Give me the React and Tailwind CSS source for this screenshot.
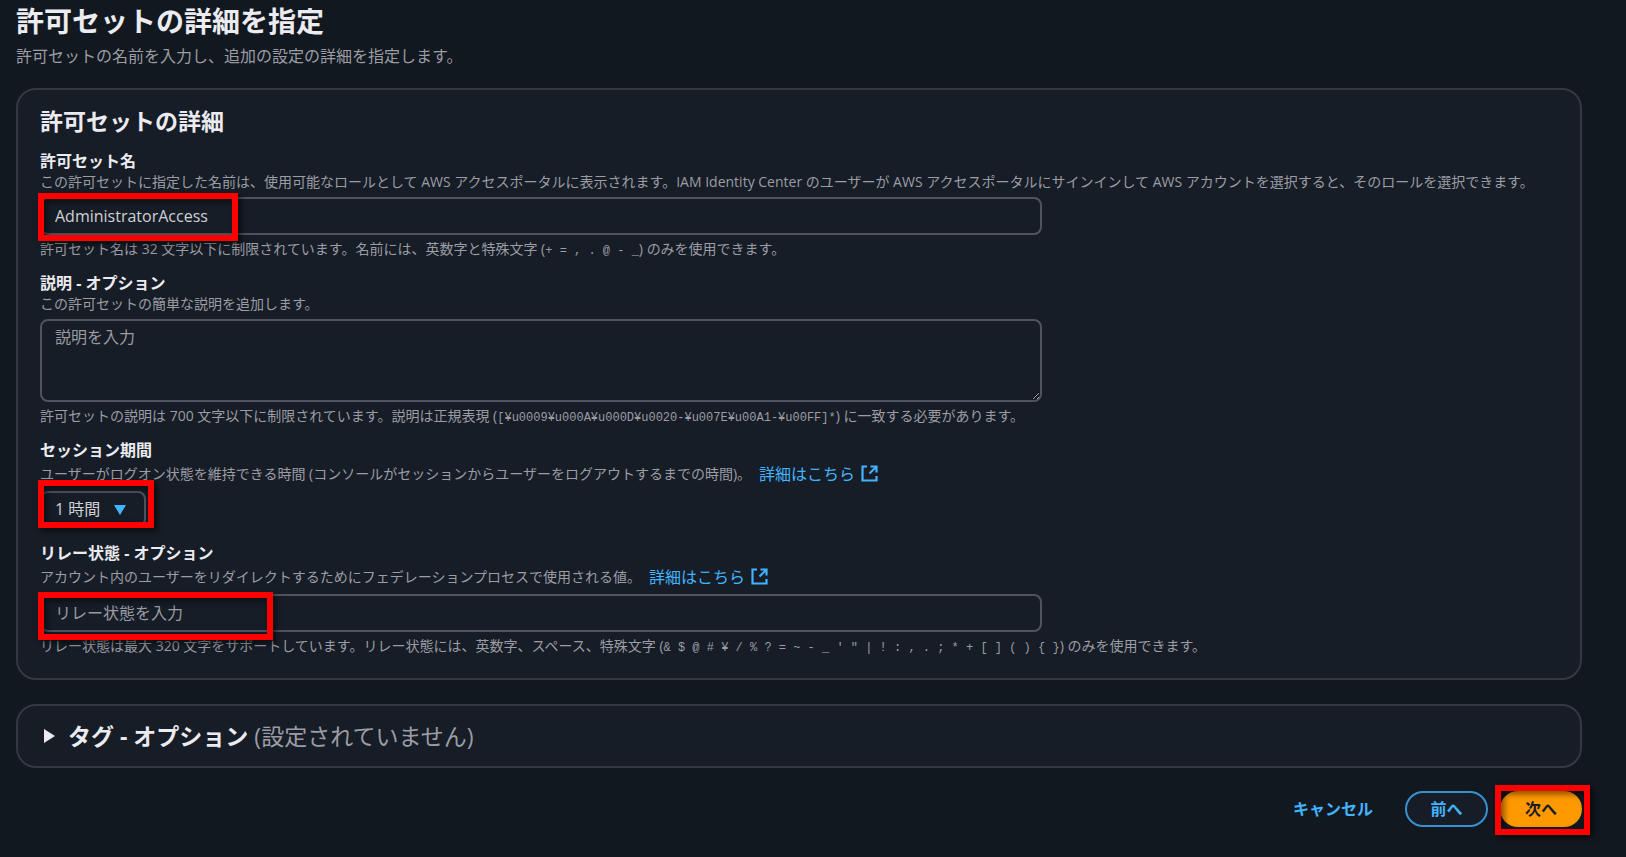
import { useState } from 'react';
import clsx from 'clsx';

const fontStack = "font-['Open_Sans','Noto_Sans_CJK_JP',sans-serif]";

function Highlight({ className }) {
  return (
    <span
      aria-hidden="true"
      className={clsx(
        'absolute pointer-events-none border-6 border-[#ff0000] shadow-[3px_3px_6px_rgba(0,0,0,0.6),inset_3px_3px_6px_rgba(0,0,0,0.5)]',
        className
      )}
    />
  );
}

function ExternalIcon() {
  return (
    <svg viewBox="0 0 17 17" className="size-[17px]" fill="none" stroke="currentColor" strokeWidth="2.2" aria-hidden="true">
      <path d="M6 1.5H1.5v14h14V11" />
      <path d="M9.5 1.5h6v6" />
      <path d="M15.5 1.5 8.5 8.5" />
    </svg>
  );
}

function MoreLink() {
  return (
    <a href="#more" className="inline-flex items-center gap-1.5 ml-2 text-base leading-5 text-[#42b4ff]">
      詳細はこちら
      <ExternalIcon />
    </a>
  );
}

function Label({ htmlFor, children }) {
  return (
    <label htmlFor={htmlFor} className="block text-base leading-5 font-bold text-[#ebebf0]">
      {children}
    </label>
  );
}

function Hint({ children }) {
  return <p className="mt-[3px] text-sm leading-[22px]">{children}</p>;
}

function Code({ children }) {
  return <code className="font-['Liberation_Mono',monospace] text-xs">{children}</code>;
}

const fieldClass =
  'block w-full rounded-lg border-2 border-[#4f535f] bg-[#161d26] px-[13px] text-base leading-6 text-[#d0d0d6] placeholder:text-[#9a9aa3] placeholder:opacity-100 outline-none';

export default function App() {
  const [name, setName] = useState('AdministratorAccess');
  const [description, setDescription] = useState('');
  const [duration, setDuration] = useState('1');
  const [relayState, setRelayState] = useState('');

  return (
    <div className={clsx(fontStack, 'min-h-screen bg-[#12181f] pl-4 pr-11 pt-1 pb-6 text-[#9c9ca5]')}>
      <header>
        <h1 className="text-[28px] leading-[34px] font-bold text-[#ebebf0]">許可セットの詳細を指定</h1>
        <p className="mt-2 text-base leading-5">許可セットの名前を入力し、追加の設定の詳細を指定します。</p>
      </header>

      <form onSubmit={(e) => e.preventDefault()}>
        <section className="mt-[22px] rounded-[20px] border-2 border-[#333843] bg-[#161d26] px-[22px] pt-4 pb-[21px]">
          <h2 className="mb-[15px] text-[23px] leading-[30px] font-bold text-[#ebebf0]">許可セットの詳細</h2>

          <div className="flex flex-col gap-[13px]">
            {/* Name */}
            <div>
              <Label htmlFor="name">許可セット名</Label>
              <p className="text-sm leading-[22px] whitespace-nowrap">
                この許可セットに指定した名前は、使用可能なロールとして AWS アクセスポータルに表示されます。IAM Identity Center のユーザーが AWS アクセスポータルにサインインして AWS アカウントを選択すると、そのロールを選択できます。
              </p>
              <div className="relative mt-1 w-[66%]">
                <input
                  id="name"
                  type="text"
                  value={name}
                  onChange={(e) => setName(e.target.value)}
                  className={clsx(fieldClass, 'h-[38px]')}
                />
                <Highlight className="-left-0.5 -top-1 h-12 w-[200px]" />
              </div>
              <Hint>
                許可セット名は 32 文字以下に制限されています。名前には、英数字と特殊文字 (<Code>+ = , . @ - _</Code>) のみを使用できます。
              </Hint>
            </div>

            {/* Description */}
            <div>
              <Label htmlFor="description">説明 - オプション</Label>
              <p className="text-sm leading-[22px]">この許可セットの簡単な説明を追加します。</p>
              <div className="mt-1 w-[66%]">
                <textarea
                  id="description"
                  placeholder="説明を入力"
                  value={description}
                  onChange={(e) => setDescription(e.target.value)}
                  className={clsx(fieldClass, 'h-[83px] resize py-1')}
                />
              </div>
              <Hint>
                許可セットの説明は 700 文字以下に制限されています。説明は正規表現 (<Code>[¥u0009¥u000A¥u000D¥u0020-¥u007E¥u00A1-¥u00FF]*</Code>) に一致する必要があります。
              </Hint>
            </div>

            {/* Session duration */}
            <div className="pb-[3px]">
              <Label htmlFor="duration">セッション期間</Label>
              <p className="flex items-center text-sm leading-[27px]">
                ユーザーがログオン状態を維持できる時間 (コンソールがセッションからユーザーをログアウトするまでの時間)。
                <MoreLink />
              </p>
              <div className="relative mt-1 w-[106px]">
                <select
                  id="duration"
                  value={duration}
                  onChange={(e) => setDuration(e.target.value)}
                  className={clsx(fieldClass, 'h-9 appearance-none')}
                >
                  <option value="1">1 時間</option>
                  <option value="2">2 時間</option>
                  <option value="4">4 時間</option>
                  <option value="8">8 時間</option>
                  <option value="12">12 時間</option>
                </select>
                <svg viewBox="0 0 12 10" className="pointer-events-none absolute right-5 top-3.5 h-2.5 w-3 text-[#42b4ff]" fill="currentColor" aria-hidden="true">
                  <path d="M0 0h12L6 10z" />
                </svg>
                <Highlight className="-left-0.5 -top-[11px] h-12 w-[116px]" />
              </div>
            </div>

            {/* Relay state */}
            <div>
              <Label htmlFor="relay-state">リレー状態 - オプション</Label>
              <p className="flex items-center text-sm leading-[27px]">
                アカウント内のユーザーをリダイレクトするためにフェデレーションプロセスで使用される値。
                <MoreLink />
              </p>
              <div className="relative mt-1 w-[66%]">
                <input
                  id="relay-state"
                  type="text"
                  placeholder="リレー状態を入力"
                  value={relayState}
                  onChange={(e) => setRelayState(e.target.value)}
                  className={clsx(fieldClass, 'h-[38px]')}
                />
                <Highlight className="-left-0.5 -top-0.5 h-12 w-[235px]" />
              </div>
              <Hint>
                リレー状態は最大 320 文字をサポートしています。リレー状態には、英数字、スペース、特殊文字 (<Code>{`& $ @ # ¥ / % ? = ~ - _ ' " | ! : , . ; * + [ ] ( ) { }`}</Code>) のみを使用できます。
              </Hint>
            </div>
          </div>
        </section>

        <section className="mt-6 rounded-[20px] border-2 border-[#333843] bg-[#161d26]">
          <button type="button" aria-expanded="false" className="flex h-[60px] w-full items-center px-6 text-[23px] leading-[30px]">
            <svg viewBox="0 0 12 14" className="ml-0.5 mr-3 h-3.5 w-3 text-[#ebebf0]" fill="currentColor" aria-hidden="true">
              <path d="M0 0v14l11-7z" />
            </svg>
            <span className="mr-1.5 font-bold text-[#ebebf0]">タグ - オプション</span>
            <span>(設定されていません)</span>
          </button>
        </section>

        <footer className="mt-[23px] flex items-center justify-end text-base font-bold">
          <button type="button" className="mr-8 h-9 text-[#42b4ff]">キャンセル</button>
          <button type="button" className="mr-3 h-9 w-[83px] rounded-full border-2 border-[#3791d0] bg-[#161d26] text-[#42b4ff]">
            前へ
          </button>
          <div className="relative">
            <button type="submit" className="block h-9 w-[82px] rounded-full bg-[#ff9900] text-[#161d26]">次へ</button>
            <Highlight className="-left-[5px] -top-1.5 h-[50px] w-[95px]" />
          </div>
        </footer>
      </form>
    </div>
  );
}
